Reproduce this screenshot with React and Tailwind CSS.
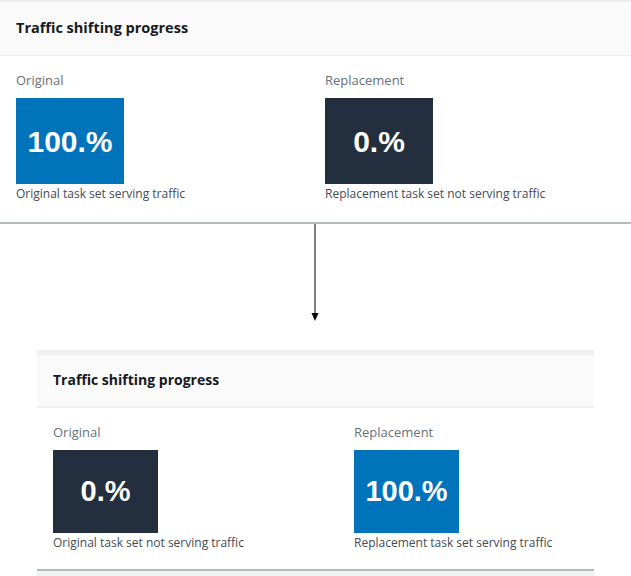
const Stat = ({ label, value, caption, tone, box, num }) => (
  <div className="flex flex-col items-start">
    <div className="text-[13px] leading-[18px] text-[#687078]">{label}</div>
    <div
      className={`mt-[9px] flex items-center justify-center text-white font-bold ${box} ${
        tone === 'blue' ? 'bg-[#0073bb]' : 'bg-[#232f3e]'
      }`}
      style={{ fontFamily: '"Liberation Sans", Arial, sans-serif' }}
    >
      <span className={num}>{value}</span>
    </div>
    <div className="mt-[2px] text-[12px] leading-[16px] text-[#444b52]">{caption}</div>
  </div>
);

const Before = () => (
  <section className="w-full border-t-2 border-[#eaeded] border-b-2 border-b-[#b4bcbd] bg-white">
    <header className="h-[54px] bg-[#fafafa] border-b border-[#eaeded] px-4 flex items-center pb-[2px]">
      <h2 className="text-[14.5px] font-bold text-[#16191f]">Traffic shifting progress</h2>
    </header>
    <div className="flex px-4 pt-[15px] pb-[20px]">
      <div className="w-[309px]">
        <Stat
          label="Original"
          value="100.%"
          caption="Original task set serving traffic"
          tone="blue"
          box="w-[108px] h-[86px]"
          num="text-[30px]"
        />
      </div>
      <Stat
        label="Replacement"
        value="0.%"
        caption="Replacement task set not serving traffic"
        tone="dark"
        box="w-[108px] h-[86px]"
        num="text-[30px]"
      />
    </div>
  </section>
);

const After = () => (
  <section className="mx-[37px] border-t-[5px] border-[#efefef] border-b-2 border-b-[#b4bcbd] bg-white">
    <header className="h-[53px] bg-[#fafafa] border-b-2 border-[#f0f0f0] px-4 flex items-center pb-[2px]">
      <h2 className="text-[14px] font-bold text-[#16191f]">Traffic shifting progress</h2>
    </header>
    <div className="flex px-4 pt-[15px] pb-[18px]">
      <div className="w-[301px]">
        <Stat
          label="Original"
          value="0.%"
          caption="Original task set not serving traffic"
          tone="dark"
          box="w-[105px] h-[83px]"
          num="text-[29px]"
        />
      </div>
      <Stat
        label="Replacement"
        value="100.%"
        caption="Replacement task set serving traffic"
        tone="blue"
        box="w-[105px] h-[83px]"
        num="text-[29px]"
      />
    </div>
  </section>
);

export default function App() {
  return (
    <div
      className="w-[631px] h-[576px] bg-white overflow-hidden"
      style={{ fontFamily: '"Open Sans", "Noto Sans", sans-serif' }}
    >
      <Before />
      {/* arrow between the two states */}
      <div className="h-[126px] flex justify-center">
        <svg width="10" height="98" viewBox="0 0 10 98" className="ml-[-1px]">
          <line x1="5" y1="0" x2="5" y2="92" stroke="#000" strokeWidth="1" />
          <path d="M1.5 89 L8.5 89 L5 97 Z" fill="#000" />
        </svg>
      </div>
      <After />
      <div className="h-[8px] mx-[37px] bg-[#f2f3f3]" />
    </div>
  );
}
